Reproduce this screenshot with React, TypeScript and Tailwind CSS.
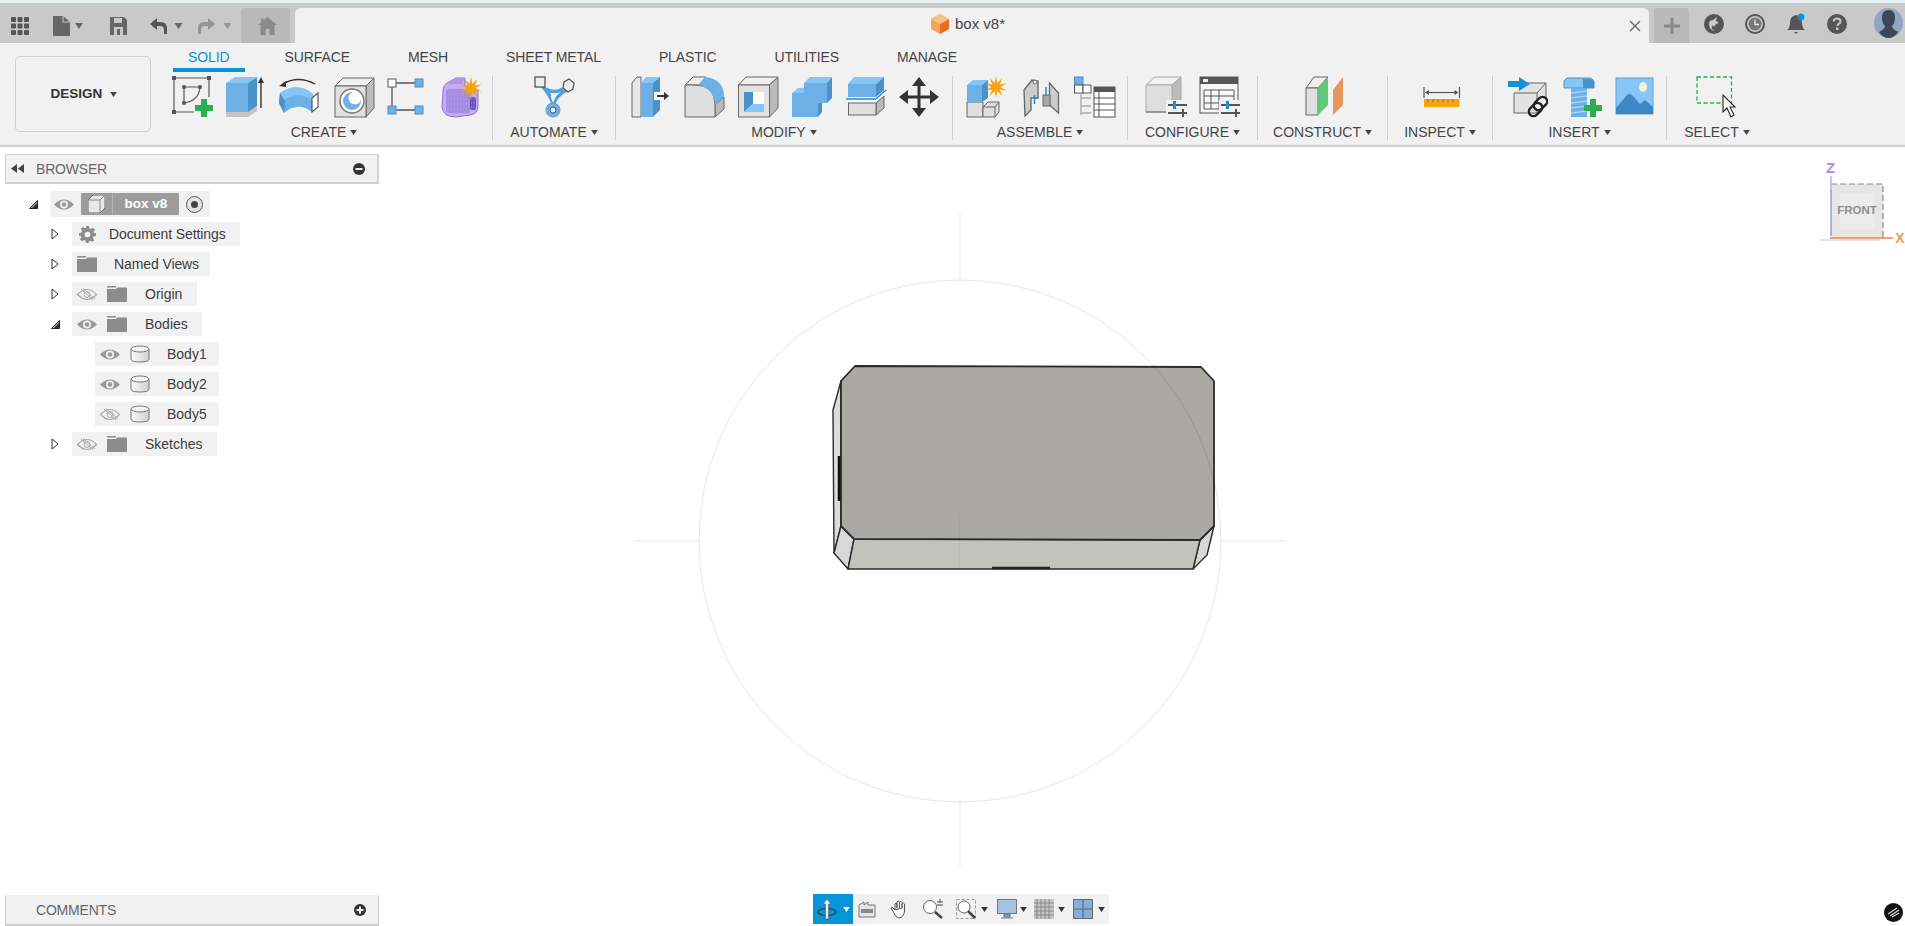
import React from 'react';

const BLUE = '#6cb0e6';
const BLUE_TOP = '#85c6f7';
const BLUE_DARK = '#4b91c9';
const EDGE = '#666';
const ORANGE = '#f5a40c';

const starPoints = (cx: number, cy: number, r1: number, r2: number, n: number) =>
  Array.from({ length: n * 2 }, (_, i) => {
    const r = i % 2 === 0 ? r1 : r2;
    const a = (Math.PI * i) / n - Math.PI / 2;
    return `${(cx + r * Math.cos(a)).toFixed(1)},${(cy + r * Math.sin(a)).toFixed(1)}`;
  }).join(' ');

const Caret = ({ color = '#444', w = 7, h = 5 }: { color?: string; w?: number; h?: number }) => (
  <svg width={w} height={h} viewBox="0 0 8 6" className="block shrink-0">
    <path d="M0 0H8L4 6Z" fill={color} />
  </svg>
);

const Ico = ({ children }: { children: React.ReactNode }) => (
  <div className="w-[54px] flex justify-center">
    <svg width="44" height="44" viewBox="0 0 44 44" className="block -mt-[2px]">
      {children}
    </svg>
  </div>
);

const Dot = ({ x, y, s = 4 }: { x: number; y: number; s?: number }) => (
  <rect x={x - s / 2} y={y - s / 2} width={s} height={s} fill="#555" />
);

const Plus = ({ cx, cy }: { cx: number; cy: number }) => (
  <path d={`M${cx - 3} ${cy - 9}h6v6h6v6h-6v6h-6v-6h-6v-6h6z`} fill="#2cae4f" />
);

const Sliders = ({ x }: { x: number }) => (
  <g>
    <rect x={x - 2} y={26} width={22} height={17} fill="#f1f1f1" />
    <path d={`M${x} 31H${x + 19}M${x} 39H${x + 19}`} stroke="#555" strokeWidth="2" />
    <rect x={x + 5} y={27} width={3} height={8} fill="#1a8fd8" />
    <rect x={x + 14} y={35} width={2} height={8} fill="#555" />
  </g>
);

const SketchIcon = () => (
  <Ico>
    <path d="M3 4H38V23M3 4V38H23" fill="none" stroke="#555" strokeWidth="1.2" />
    <Dot x={3} y={4} /><Dot x={38} y={4} /><Dot x={3} y={38} />
    <path d="M13 13H29M13 13V29M29 13Q28 27 13 29" fill="none" stroke="#555" strokeWidth="1.2" />
    <Dot x={13} y={13} s={3.5} /><Dot x={29} y={13} s={3.5} /><Dot x={13} y={29} s={3.5} />
    <Plus cx={33} cy={34} />
  </Ico>
);

const ExtrudeIcon = () => (
  <Ico>
    <g transform="translate(-2 0)">
      <path d="M3 38H25L34 32V37L25 43H3Z" fill="#c4c4c4" />
      <path d="M3 9L12 3H34L25 9Z" fill={BLUE_TOP} />
      <path d="M25 9L34 3V32L25 38Z" fill={BLUE_DARK} />
      <rect x="3" y="9" width="22" height="29" fill={BLUE} />
      <path d="M38 8V34" stroke="#333" strokeWidth="1.4" />
      <path d="M38 3L35 9H41Z" fill="#333" />
    </g>
  </Ico>
);

const SweepIcon = () => (
  <Ico>
    <g transform="translate(-2 0)">
      <path d="M3 19Q21 7 36 20L35 38Q21 27 7 39L2 29Z" fill={BLUE} />
      <path d="M3 19Q21 7 36 20L35 26Q21 15 2 29Z" fill={BLUE_TOP} />
      <path d="M3 19L2 29L7 39L8 27Z" fill={BLUE_DARK} />
      <path d="M35 24L41 19V33L35 38Z" fill="#fff" stroke="#555" strokeWidth="1.2" />
      <path d="M6 10Q21 1 38 10" fill="none" stroke="#333" strokeWidth="1.4" />
      <path d="M2 12L9 7V13Z" fill="#333" />
    </g>
  </Ico>
);

const RevolveIcon = () => (
  <Ico>
    <path d="M2 12L10 4H41L33 12Z" fill="#efefef" stroke={EDGE} />
    <path d="M33 12L41 4V34L33 43Z" fill="#bbb" stroke={EDGE} />
    <rect x="2" y="12" width="31" height="31" fill="#e0e0e0" stroke={EDGE} />
    <circle cx="19" cy="27" r="12" fill="#fff" stroke="#777" strokeWidth="1.5" />
    <circle cx="19" cy="27" r="9" fill={BLUE} />
    <circle cx="22" cy="24" r="6.5" fill="#fff" />
  </Ico>
);

const NodesIcon = () => (
  <Ico>
    <path d="M9 9H28M5 13V32M9 36H28" stroke="#555" strokeWidth="1.3" />
    <rect x="1" y="5" width="8" height="8" fill="#fff" stroke="#555" />
    <rect x="28" y="5" width="8" height="8" fill={BLUE} stroke={BLUE_DARK} />
    <rect x="1" y="32" width="8" height="8" fill={BLUE} stroke={BLUE_DARK} />
    <rect x="28" y="32" width="8" height="8" fill={BLUE} stroke={BLUE_DARK} />
  </Ico>
);

const FormIcon = () => (
  <Ico>
    <g transform="translate(-1 0)">
      <path d="M3 18Q3 10 9 8L16 4H25V12H32L38 18V32Q38 40 30 41L16 43Q3 43 2 33Z" fill="#c3adef" stroke="#8f6bd6" />
      <path d="M8 8L16 4H25L22 10H10Z" fill="#b094e8" />
      <rect x="6" y="15" width="24" height="24" rx="3" fill="#a68ce2" />
      <path d="M8 20H28M8 25H28M8 30H28M8 35H28" stroke="#c7b5f0" strokeWidth="0.8" strokeDasharray="1 2" />
      <rect x="30" y="23" width="6" height="13" rx="2" fill="#6f52bf" />
      <path d="M31 25H35M31 29H35M31 33H35" stroke="#b7a2ea" strokeWidth="0.8" strokeDasharray="1 1.500" />
      <polygon points={starPoints(31, 14, 11, 4.5, 10)} fill={ORANGE} />
    </g>
  </Ico>
);

const AutomateIcon = () => (
  <Ico>
    <path d="M10 12Q18 20 21 30M35 16Q26 20 21 30M14 15Q22 20 31 15" fill="none" stroke="#4f9fd8" strokeWidth="3.4" />
    <path d="M18.500 22L21 29L24 22Z" fill="#f1f1f1" />
    <rect x="3" y="3" width="10" height="10" fill="#eee" stroke="#555" strokeWidth="1.3" />
    <path d="M37 5L42 9L41 15L36 18L31 14L32 8Z" fill="#eee" stroke="#555" strokeWidth="1.3" />
    <circle cx="21" cy="36" r="7" fill="#6cb0e6" stroke="#4f9fd8" />
    <circle cx="21" cy="36" r="3" fill="#eee" stroke="#555" />
  </Ico>
);

const PressPullIcon = () => (
  <Ico>
    <path d="M5 9L10 3H14V43H5Z" fill="#e8e8e8" stroke={EDGE} />
    <path d="M14 9L19 3H33L26 9Z" fill={BLUE_TOP} />
    <path d="M26 9L33 3V36L26 43Z" fill={BLUE_DARK} />
    <rect x="14" y="9" width="12" height="34" fill={BLUE} />
    <rect x="27" y="18" width="8" height="8" fill="#fff" />
    <path d="M30 22H38" stroke="#333" strokeWidth="2" />
    <path d="M42 22L37 18V26Z" fill="#333" />
  </Ico>
);

const FilletIcon = () => (
  <Ico>
    <path d="M4 11L12 3H25L18 11Z" fill="#eee" stroke={EDGE} />
    <path d="M34 31L43 23V35L34 43Z" fill="#bbb" stroke={EDGE} />
    <path d="M4 11V43H34V31Q34 11 14 11Z" fill="#dedede" stroke={EDGE} />
    <path d="M18 11L24 3Q43 5 43 23L34 31Q33 15 18 11Z" fill={BLUE} />
  </Ico>
);

const ShellIcon = () => (
  <Ico>
    <path d="M3.5 11L11 3H43L34.5 11Z" fill="#efefef" stroke={EDGE} />
    <path d="M34.5 11L43 3V34L34.5 43Z" fill="#bbb" stroke={EDGE} />
    <rect x="3.5" y="11" width="31" height="32" fill="#e2e2e2" stroke={EDGE} />
    <rect x="9" y="18" width="20" height="20" fill="#fff" />
    <path d="M9 18H18V30L9 38Z" fill={BLUE_DARK} />
    <path d="M9 38L18 30H29V38Z" fill={BLUE_TOP} />
  </Ico>
);

const CombineIcon = () => (
  <Ico>
    <path d="M15 9L21 3H43L38 9Z" fill={BLUE_TOP} />
    <path d="M38 9L43 3V24L38 29Z" fill={BLUE_DARK} />
    <rect x="15" y="9" width="23" height="20" fill={BLUE} />
    <path d="M3 19L9 14H15V19Z" fill={BLUE_TOP} />
    <path d="M29 29H33V38L29 43Z" fill={BLUE_DARK} />
    <rect x="3" y="19" width="26" height="24" fill={BLUE} />
  </Ico>
);

const SplitIcon = () => (
  <Ico>
    <path d="M5 10L11 3H41L33 10Z" fill={BLUE_TOP} />
    <path d="M33 10L41 3V16L33 23Z" fill={BLUE_DARK} />
    <rect x="5" y="10" width="28" height="13" fill={BLUE} />
    <path d="M33 29L41 22V34L33 41Z" fill="#bbb" stroke={EDGE} />
    <rect x="5.5" y="29" width="27.5" height="12" fill="#dedede" stroke={EDGE} />
    <path d="M3 25H33L43 16" fill="none" stroke="#1a8fd8" strokeWidth="1.6" />
    <path d="M3 27H33L43 18" fill="none" stroke="#fff" strokeWidth="1.6" />
  </Ico>
);

const MoveIcon = () => (
  <Ico>
    <path d="M22 6V40M5 23H39" stroke="#333" strokeWidth="3" />
    <path d="M22 3L15 12H29ZM22 43L15 34H29ZM2 23L11 16V30ZM42 23L33 16V30Z" fill="#333" />
  </Ico>
);

const ComponentIcon = () => (
  <Ico>
    <path d="M3 28H19V43H3Z" fill="#dedede" stroke={EDGE} />
    <path d="M19 33L24 28H35V38L31 43H19Z" fill="#dedede" stroke={EDGE} />
    <path d="M19 33H31V43M31 33L35 28" fill="none" stroke={EDGE} />
    <path d="M3 11L9 6H24L18 11Z" fill={BLUE_TOP} />
    <path d="M18 11L24 6V24L18 28Z" fill={BLUE_DARK} />
    <rect x="3" y="11" width="15" height="17" fill={BLUE} />
    <polygon points={starPoints(32, 13, 11, 4.5, 10)} fill={ORANGE} />
  </Ico>
);

const JointIcon = () => (
  <Ico>
    <path d="M6 16L14 6L20 7V24H13V36L7 42Z" fill="#ccc" stroke={EDGE} strokeWidth="1.3" />
    <path d="M31.5 9L40.5 19V39L31.5 31Z" fill="#ccc" stroke={EDGE} strokeWidth="1.3" />
    <rect x="25" y="21" width="7" height="11" fill="#aaa" stroke={EDGE} />
    <circle cx="17" cy="8" r="2" fill="#fff" stroke={EDGE} />
    <path d="M16.5 21V30M28 13V22" stroke="#1a8fd8" strokeWidth="1.5" />
  </Ico>
);

const BomIcon = () => (
  <Ico>
    <rect x="2.5" y="3" width="8.5" height="8" fill={BLUE} stroke={BLUE_DARK} />
    <rect x="2.5" y="11" width="8.5" height="8" fill="#fff" stroke="#555" />
    <rect x="11" y="11" width="8" height="8" fill="#fff" stroke="#555" />
    <path d="M9 19V41M9 24H19M9 32H19M9 39H19" stroke="#aaa" strokeWidth="1.4" />
    <rect x="22" y="13" width="21" height="30" fill="#fff" stroke="#555" />
    <rect x="22" y="13" width="21" height="5" fill="#555" />
    <path d="M22 24H43M22 30H43M22 36H43M27 18V43" stroke="#555" />
  </Ico>
);

const ConfigCubeIcon = () => (
  <Ico>
    <path d="M2 11L11 3H37L28 11Z" fill="#f0f0f0" stroke="#aaa" />
    <path d="M28 11L37 3V29L28 38Z" fill="#bcbcbc" stroke="#aaa" />
    <path d="M2 11H28V38H2Z" fill="#dedede" stroke="#aaa" />
    <path d="M2 38H28L37 29" fill="none" stroke={EDGE} />
    <Sliders x={24} />
  </Ico>
);

const ConfigTableIcon = () => (
  <Ico>
    <rect x="2" y="3" width="38" height="36" fill="#f6f6f6" stroke="#555" />
    <rect x="2" y="3" width="38" height="7" fill="#555" />
    <rect x="5" y="5" width="5" height="3" fill="#eee" />
    <path d="M6 16H36V35H6ZM6 22H36M6 29H36M13 16V35M21 16V35" fill="none" stroke="#555" />
    <Sliders x={23} />
  </Ico>
);

const ConstructIcon = () => (
  <Ico>
    <path d="M5 14L13 3H27L17 14Z" fill="#efefef" stroke={EDGE} />
    <path d="M5 14H17V41H5Z" fill="#e0e0e0" stroke={EDGE} />
    <path d="M17 14L27 3V31L17 41Z" fill="#62c878" />
    <path d="M32 16L42 3V31L32 41Z" fill="#e3965e" />
  </Ico>
);

const InspectIcon = () => (
  <Ico>
    <path d="M6 13V24M41.5 13V24" stroke="#555" strokeWidth="1.2" />
    <path d="M9 18.5H39" stroke="#555" strokeWidth="1.2" />
    <path d="M7 18.5L11 16V21ZM40.5 18.5L36.5 16V21Z" fill="#555" />
    <rect x="6" y="25" width="35.5" height="8" fill={ORANGE} />
    <path d="M10 25v3M15 25v3M20 25v3M25 25v3M30 25v3M35 25v3" stroke="#a56f10" />
  </Ico>
);

const LinkIcon = () => (
  <Ico>
    <path d="M10 19L20 9H42L42 30L34 39H10Z" fill="#e2e2e2" />
    <path d="M10 19H33V39H10ZM33 19L42 9V32" fill="none" stroke={EDGE} />
    <path d="M20 9H42" stroke={EDGE} />
    <path d="M4 7H15V3L26 10L15 17V13H4Z" fill="#1a8fd8" />
    <rect x="32" y="22" width="9" height="15" rx="4.500" transform="rotate(45 36.500 29.500)" fill="#f1f1f1" stroke="#222" strokeWidth="2.4" />
    <rect x="27" y="28" width="9" height="15" rx="4.500" transform="rotate(45 31.500 35.500)" fill="none" stroke="#222" strokeWidth="2.4" />
  </Ico>
);

const BoltIcon = () => (
  <Ico>
    <path d="M6 7L9 4H33L36 7V14H6Z" fill={BLUE_TOP} stroke={BLUE_DARK} />
    <path d="M25 5H33L36 7V14H25Z" fill={BLUE_DARK} />
    <rect x="13" y="14" width="16" height="29" fill={BLUE} />
    <path d="M13 19L29 17M13 24L29 22M13 29L29 27M13 34L29 32M13 39L29 37" stroke="#a7d3f5" strokeWidth="1.4" />
    <Plus cx={35} cy={34} />
  </Ico>
);

const ImageIcon = () => (
  <Ico>
    <rect x="4" y="4" width="37" height="36" fill="#87c6f8" stroke="#5aa3dc" />
    <path d="M4 34L15 21Q18 18 22 23L28 30L33 26L41 33V40H4Z" fill="#3f88c8" />
    <ellipse cx="31" cy="13" rx="4" ry="5" fill="#f5f2d2" />
  </Ico>
);

const SelectIcon = () => (
  <Ico>
    <rect x="2" y="3" width="34.5" height="26" fill="none" stroke="#2cae4f" strokeWidth="1.3" strokeDasharray="4 2.5" />
    <path d="M28 21V38L32 34L36 43L39 41L35 33H40Z" fill="#fff" stroke="#222" strokeWidth="1.1" />
  </Ico>
);

const Group = ({ label, className, labelClass = '', children }: { label: string; className: string; labelClass?: string; children: React.ReactNode }) => (
  <div className={`h-[64px] flex flex-col items-center border-r border-[#cfcfcf] ${className}`}>
    <div className="h-[42px] flex">{children}</div>
    <div className={`mt-[6px] flex items-center gap-[4px] text-[14px] leading-[16px] text-[#444] ${labelClass}`}>
      {label}
      <Caret />
    </div>
  </div>
);

const tabs = ['SOLID', 'SURFACE', 'MESH', 'SHEET METAL', 'PLASTIC', 'UTILITIES', 'MANAGE'];

const Ribbon = () => (
  <div className="h-[104px] bg-[#f1f1f1] border-b-2 border-[#cfcfcf] flex">
    <div className="w-[164px] shrink-0 pl-[15px] pt-[13px]">
      <div className="w-[136px] h-[76px] pl-[2px] rounded-[5px] border border-[#cfcfcf] flex items-center justify-center gap-[8px] text-[13.5px] font-bold text-[#333]">
        DESIGN
        <Caret />
      </div>
    </div>
    <div className="flex-1">
      <div className="h-[29px] flex gap-[28px] pl-[9px] tracking-[-0.1px]">
        {tabs.map((t, i) => (
          <div
            key={t}
            className={
              i === 0
                ? 'px-[15px] -mr-[3px] h-[29px] pt-[6px] text-[14px] leading-[16px] text-[#0696d7] border-b-4 border-[#0696d7]'
                : 'px-[15px] h-[29px] pt-[6px] text-[14px] leading-[16px] text-[#444]'
            }
          >
            {t}
          </div>
        ))}
      </div>
      <div className="mt-[4px] flex">
        <Group label="CREATE" className="w-[329px]" labelClass="mr-[8px]">
          <SketchIcon /><ExtrudeIcon /><SweepIcon /><RevolveIcon /><NodesIcon /><FormIcon />
        </Group>
        <Group label="AUTOMATE" className="w-[123px]">
          <AutomateIcon />
        </Group>
        <Group label="MODIFY" className="w-[337px]">
          <PressPullIcon /><FilletIcon /><ShellIcon /><CombineIcon /><SplitIcon /><MoveIcon />
        </Group>
        <Group label="ASSEMBLE" className="w-[175px]">
          <ComponentIcon /><JointIcon /><BomIcon />
        </Group>
        <Group label="CONFIGURE" className="w-[130px]">
          <ConfigCubeIcon /><ConfigTableIcon />
        </Group>
        <Group label="CONSTRUCT" className="w-[130px]">
          <ConstructIcon />
        </Group>
        <Group label="INSPECT" className="w-[105px]">
          <InspectIcon />
        </Group>
        <Group label="INSERT" className="w-[174px]">
          <LinkIcon /><BoltIcon /><ImageIcon />
        </Group>
        <div className="w-[100px] h-[64px] flex flex-col items-center">
          <div className="h-[42px] flex"><SelectIcon /></div>
          <div className="mt-[6px] flex items-center gap-[4px] text-[14px] leading-[16px] text-[#444]">
            SELECT
            <Caret />
          </div>
        </div>
      </div>
    </div>
  </div>
);

const TabBar = () => (
  <div className="h-[40px] bg-[#c9c9c9] flex">
    <div className="flex items-center h-full w-[241px] shrink-0 pt-[6px]">
      <svg width="18" height="18" viewBox="0 0 18 18" className="ml-[11px]">
        <path d="M0 1q0-1 1-1h3q1 0 1 1v3q0 1-1 1H1q-1 0-1-1zM6.5 1q0-1 1-1h3q1 0 1 1v3q0 1-1 1h-3q-1 0-1-1zM13 1q0-1 1-1h3q1 0 1 1v3q0 1-1 1h-3q-1 0-1-1zM0 7.500q0-1 1-1h3q1 0 1 1v3q0 1-1 1H1q-1 0-1-1zM6.500 7.500q0-1 1-1h3q1 0 1 1v3q0 1-1 1h-3q-1 0-1-1zM13 7.500q0-1 1-1h3q1 0 1 1v3q0 1-1 1h-3q-1 0-1-1zM0 14q0-1 1-1h3q1 0 1 1v3q0 1-1 1H1q-1 0-1-1zM6.500 14q0-1 1-1h3q1 0 1 1v3q0 1-1 1h-3q-1 0-1-1zM13 14q0-1 1-1h3q1 0 1 1v3q0 1-1 1h-3q-1 0-1-1z" fill="#555" />
      </svg>
      <svg width="17" height="20" viewBox="0 0 17 20" className="ml-[24px]">
        <path d="M0 1Q0 0 1 0H10L17 6V19Q17 20 16 20H1Q0 20 0 19Z" fill="#666" />
        <path d="M10 0V6H17" fill="none" stroke="#c9c9c9" />
      </svg>
      <div className="ml-[5px]"><Caret color="#666" w={8} h={6} /></div>
      <svg width="17" height="18" viewBox="0 0 17 18" className="ml-[27px]">
        <path d="M0 1Q0 0 1 0H14L17 3V17Q17 18 16 18H1Q0 18 0 17Z" fill="#666" />
        <rect x="4" y="1" width="8" height="5" fill="#c9c9c9" />
        <rect x="4" y="10" width="9" height="8" fill="#c9c9c9" />
        <rect x="7" y="12" width="3" height="6" fill="#666" />
      </svg>
      <svg width="18" height="18" viewBox="0 0 18 18" className="ml-[22px]">
        <path d="M8 1L1 7L8 13V9H11Q15 9 15 13V17H18V11Q18 5 11 5H8Z" fill="#555" />
      </svg>
      <div className="ml-[7px]"><Caret color="#666" w={9} h={6} /></div>
      <svg width="18" height="18" viewBox="0 0 18 18" className="ml-[15px]">
        <path d="M10 1L17 7L10 13V9H7Q3 9 3 13V17H0V11Q0 5 7 5H10Z" fill="#959595" />
      </svg>
      <div className="ml-[7px]"><Caret color="#959595" w={9} h={6} /></div>
    </div>
    <div className="w-[49px] mt-[5px] pl-[4px] rounded-t-[4px] bg-[#b9b9b9] flex items-center justify-center shrink-0">
      <svg width="19" height="18" viewBox="0 0 19 18">
        <path d="M9.500 0L19 8H16.500V18H11.500V12H7.500V18H2.500V8H0L3 5.500V1.500H5.500V3.500Z" fill="#8a8a8a" />
      </svg>
    </div>
    <div className="flex-1 ml-[5px] mt-[5px] rounded-t-[6px] bg-[#f1f1f1] flex items-center relative">
      <div className="w-full flex items-center justify-center gap-[6px] -mt-[4px] pr-[8px]">
        <svg width="18" height="20" viewBox="0 0 18 20">
          <path d="M9 0L18 5V15L9 20L0 15V5Z" fill="#f2a45c" />
          <path d="M9 10L18 5V15L9 20Z" fill="#f26a1c" />
          <path d="M0 5L9 0L18 5L9 10Z" fill="#f7c089" />
        </svg>
        <span className="text-[15px] leading-[20px] text-[#444]">box v8*</span>
      </div>
      <svg width="12" height="12" viewBox="0 0 12 12" className="absolute right-[8px] top-[12px]">
        <path d="M1 1L11 11M11 1L1 11" stroke="#666" strokeWidth="1.3" />
      </svg>
    </div>
    <div className="w-[256px] shrink-0 flex items-center pt-[5px]">
      <div className="ml-[5px] w-[35px] h-[35px] rounded-t-[4px] bg-[#b9b9b9] flex items-center justify-center">
        <svg width="16" height="16" viewBox="0 0 16 16">
          <path d="M6.500 0h3v6.500H16v3H9.500V16h-3V9.500H0v-3h6.500z" fill="#8a8a8a" />
        </svg>
      </div>
      <svg width="20" height="20" viewBox="0 0 20 20" className="ml-[15px] -mt-[3px]">
        <circle cx="10" cy="10" r="10" fill="#555" />
        <path d="M5 10Q5 6 9 6L13 3L12 7L15 9L12 10L10 13L9 11Q7 13 8 15L11 17Q5 16 5 10Z" fill="#c9c9c9" />
      </svg>
      <svg width="20" height="20" viewBox="0 0 20 20" className="ml-[21px] -mt-[3px]">
        <circle cx="10" cy="10" r="9" fill="#c9c9c9" stroke="#555" strokeWidth="2" />
        <circle cx="10" cy="10" r="6.500" fill="#777" />
        <path d="M10 5.500V10.500H14" fill="none" stroke="#e8e8e8" strokeWidth="1.3" />
      </svg>
      <svg width="20" height="22" viewBox="0 0 20 22" className="ml-[21px] -mt-[3px]">
        <path d="M10 2Q4 3 4 10Q4 15 1 17H19Q16 15 16 10Q16 3 10 2Z" fill="#555" />
        <path d="M8 19H12L10 21Z" fill="#555" />
        <circle cx="15" cy="4" r="3.500" fill="#1a8fd8" />
      </svg>
      <svg width="20" height="20" viewBox="0 0 20 20" className="ml-[21px] -mt-[3px]">
        <circle cx="10" cy="10" r="10" fill="#555" />
        <path d="M6.500 7.500Q7 4.500 10 4.500Q13.500 4.500 13.500 7.500Q13.500 9 11.500 10Q10.500 10.700 10.500 12" fill="none" stroke="#c9c9c9" strokeWidth="2" />
        <rect x="9" y="13.500" width="2.500" height="2.500" fill="#c9c9c9" />
      </svg>
      <svg width="29" height="30" viewBox="0 0 29 30" className="ml-[27px] -mt-[5px]">
        <ellipse cx="14.500" cy="15" rx="14.500" ry="15" fill="#8ea6c2" />
        <path d="M14.500 2Q8 2 8 10Q8 15 11 18Q11 21 5 24Q9 30 14.500 30Q20 30 24 24Q18 21 18 18Q21 15 21 10Q21 2 14.500 2Z" fill="#3c4656" />
      </svg>
    </div>
  </div>
);

const Eye = ({ hidden }: { hidden?: boolean }) =>
  hidden ? (
    <svg width="20" height="13" viewBox="0 0 20 13">
      <path d="M0.500 6.500Q10 -3.500 19.500 6.500Q10 16.500 0.500 6.500Z" fill="none" stroke="#aaa" strokeWidth="1.2" />
      <circle cx="10" cy="6.500" r="3" fill="none" stroke="#aaa" />
      <path d="M4 1L16 12M6 0.500L18 11" stroke="#aaa" strokeWidth="1" />
    </svg>
  ) : (
    <svg width="20" height="13" viewBox="0 0 20 13">
      <path d="M0 6.500Q10 -3.500 20 6.500Q10 16.500 0 6.500Z" fill="#999" />
      <circle cx="10" cy="6.500" r="4" fill="#f1f1f1" />
      <circle cx="10" cy="6.500" r="2.300" fill="#999" />
    </svg>
  );

const Folder = () => (
  <svg width="20" height="16" viewBox="0 0 20 16">
    <path d="M0 0H9V1.500H0Z" fill="#8c8c8c" />
    <path d="M0 3H9L10 1.500H20V16H0Z" fill="#8c8c8c" />
  </svg>
);

const Gear = () => (
  <svg width="17" height="17" viewBox="0 0 24 24">
    <path d="M10 0h4l.6 3.300 2.300 1 2.800-1.900 2.900 2.900-1.900 2.800 1 2.300L24 10v4l-3.300.6-1 2.300 1.900 2.800-2.900 2.900-2.800-1.900-2.300 1L14 24h-4l-.6-3.300-2.300-1-2.800 1.900-2.900-2.900 1.900-2.800-1-2.300L0 14v-4l3.300-.6 1-2.300L2.400 4.300l2.900-2.900 2.800 1.900 2.300-1zM12 8a4 4 0 100 8 4 4 0 000-8z" fill="#8c8c8c" fillRule="evenodd" />
  </svg>
);

const Cylinder = () => (
  <svg width="20" height="18" viewBox="0 0 20 18">
    <defs>
      <linearGradient id="cyl" x1="0" x2="1" y1="0" y2="0">
        <stop offset="0" stopColor="#fafafa" />
        <stop offset="1" stopColor="#cfcfcf" />
      </linearGradient>
    </defs>
    <path d="M1 4V14Q1 17 10 17Q19 17 19 14V4Z" fill="url(#cyl)" stroke="#777" />
    <ellipse cx="10" cy="4" rx="9" ry="3" fill="#f4f4f4" stroke="#777" />
  </svg>
);

const Arrow = ({ open }: { open?: boolean }) =>
  open ? (
    <svg width="9" height="9" viewBox="0 0 9 9">
      <path d="M0.500 8.500L8.500 0.500V8.500Z" fill="#aaa" stroke="#222" />
      <path d="M3 8L8 3V8Z" fill="#333" />
    </svg>
  ) : (
    <svg width="8" height="12" viewBox="0 0 8 12">
      <path d="M1 1L7 6L1 11Z" fill="#fff" stroke="#333" />
    </svg>
  );

type Node = {
  label: string;
  indent: string;
  arrow?: 'open' | 'closed';
  eye?: 'on' | 'off';
  icon: 'folder' | 'gear' | 'cyl';
  labelClass: string;
};

const nodes: Node[] = [
  { label: 'Document Settings', indent: 'ml-[45px]', arrow: 'closed', icon: 'gear', labelClass: 'pl-[7px] pr-[14px] tracking-[-0.1px]' },
  { label: 'Named Views', indent: 'ml-[45px]', arrow: 'closed', icon: 'folder', labelClass: 'pl-[12px] pr-[11px] tracking-[-0.1px]' },
  { label: 'Origin', indent: 'ml-[45px]', arrow: 'closed', eye: 'off', icon: 'folder', labelClass: 'pl-[13px] pr-[15px]' },
  { label: 'Bodies', indent: 'ml-[45px]', arrow: 'open', eye: 'on', icon: 'folder', labelClass: 'pl-[13px] pr-[14px]' },
  { label: 'Body1', indent: 'ml-[68px]', eye: 'on', icon: 'cyl', labelClass: 'pl-[12px] pr-[12px]' },
  { label: 'Body2', indent: 'ml-[68px]', eye: 'on', icon: 'cyl', labelClass: 'pl-[12px] pr-[12px]' },
  { label: 'Body5', indent: 'ml-[68px]', eye: 'off', icon: 'cyl', labelClass: 'pl-[12px] pr-[12px]' },
  { label: 'Sketches', indent: 'ml-[45px]', arrow: 'closed', eye: 'off', icon: 'folder', labelClass: 'pl-[13px] pr-[14px]' },
];

const TreeRow = ({ node }: { node: Node }) => (
  <div className={`flex items-center h-[24px] ${node.indent}`}>
    <div className="w-[22px] flex justify-start pl-[1px]">
      {node.arrow === 'open' && <Arrow open />}
      {node.arrow === 'closed' && <Arrow />}
    </div>
    <div className="h-full bg-[#f1f1f1] flex items-center">
      {node.eye && (
        <div className="w-[30px] flex justify-center">
          <Eye hidden={node.eye === 'off'} />
        </div>
      )}
      <div className="w-[30px] flex justify-center">
        {node.icon === 'folder' && <Folder />}
        {node.icon === 'gear' && <Gear />}
        {node.icon === 'cyl' && <Cylinder />}
      </div>
      <div className={`text-[14px] leading-[24px] text-[#3c3c3c] ${node.labelClass}`}>{node.label}</div>
    </div>
  </div>
);

const BrowserPanel = () => (
  <div className="absolute left-[5px] top-[7px] w-[374px]">
    <div className="h-[30px] bg-[#f1f1f1] border border-[#d2d2d2] border-b-2 border-r-2 flex items-center">
      <svg width="13" height="9" viewBox="0 0 13 9" className="ml-[5px]">
        <path d="M6 0V9L0 4.500ZM13 0V9L7 4.500Z" fill="#444" />
      </svg>
      <span className="ml-[12px] pt-[1px] text-[14px] tracking-[-0.2px] text-[#666]">BROWSER</span>
      <svg width="12" height="12" viewBox="0 0 12 12" className="ml-auto mr-[12px]">
        <circle cx="6" cy="6" r="6" fill="#333" />
        <rect x="2.500" y="5" width="7" height="2" fill="#f1f1f1" />
      </svg>
    </div>
    <div className="mt-[7px] flex items-center h-[26px]">
      <div className="ml-[23px] w-[22px] pl-[1px]">
        <Arrow open />
      </div>
      <div className="h-full bg-[#f1f1f1] flex items-center">
        <div className="w-[31px] flex justify-center -ml-[1px] pr-[1px]"><Eye /></div>
        <div className="h-[22px] ml-[1px] bg-[#9c9c9c] flex items-center">
          <div className="w-[32px] h-full border-r border-[#b5b5b5] flex items-center justify-center">
            <svg width="17" height="18" viewBox="0 0 17 18">
              <path d="M0 5L5 0H17V13L12 18H0Z" fill="#e8e8e8" stroke="#666" />
              <path d="M0 5H12V18M12 5L17 0" fill="none" stroke="#888" />
            </svg>
          </div>
          <div className="w-[66px] text-center text-[13.5px] font-bold text-white leading-[22px]">box v8</div>
        </div>
        <div className="w-[31px] flex justify-center pr-[1px]">
          <svg width="17" height="17" viewBox="0 0 17 17">
            <circle cx="8.500" cy="8.500" r="8" fill="#e4e4e4" stroke="#555" />
            <circle cx="8.500" cy="8.500" r="3.500" fill="#444" />
          </svg>
        </div>
      </div>
    </div>
    <div className="mt-[5px] flex flex-col gap-[6px]">
      {nodes.map((n) => (
        <TreeRow key={n.label} node={n} />
      ))}
    </div>
  </div>
);

const CommentsPanel = () => (
  <div className="absolute left-[5px] bottom-0 w-[374px] h-[31px] bg-[#f1f1f1] border-b-2 border-x border-[#cfcfcf] flex items-center">
    <span className="ml-[30px] pt-[1px] text-[14px] tracking-[-0.2px] text-[#666]">COMMENTS</span>
    <svg width="12" height="12" viewBox="0 0 12 12" className="ml-auto mr-[12px]">
      <circle cx="6" cy="6" r="6" fill="#333" />
      <path d="M5 2.500h2V5h2.500v2H7v2.500H5V7H2.500V5H5z" fill="#f1f1f1" />
    </svg>
  </div>
);

const Model = () => (
  <svg width="680" height="680" viewBox="620 200 680 680" className="absolute left-[620px] top-[53px]">
    <g stroke="#e6e6e6" strokeWidth="1">
      <path d="M634 541H699M1221 541H1286M960 214V279M960 802V866" />
    </g>
    <g stroke="#2a2a2a" strokeWidth="1.4" strokeLinejoin="round">
      <path d="M841 381L833 410L834 553L841 526Z" fill="#dcdcdc" />
      <path d="M841 526L854 539L848 569L834 553Z" fill="#d8d8d8" />
      <path d="M1214 526L1200 540L1193 569L1207 555Z" fill="#d8d8d8" />
      <path d="M854 539L1200 540L1193 569L848 569Z" fill="#c1c4bc" />
      <path d="M855 366L1201 367L1214 381V526L1200 540L854 539L841 526V381Z" fill="#aaa9a3" strokeWidth="1.8" />
    </g>
    <path d="M839 456V501" stroke="#111" strokeWidth="2.5" />
    <path d="M992 568H1050" stroke="#222" strokeWidth="2.5" />
    <path d="M959.500 515V567" stroke="#000" strokeOpacity="0.04" />
    <circle cx="960" cy="541" r="261" fill="none" stroke="#000" strokeOpacity="0.1" />
  </svg>
);

const ViewCube = () => (
  <svg width="85" height="100" viewBox="1820 155 85 100" className="absolute left-[1820px] top-[8px]">
    <rect x="1831" y="184" width="52" height="54" fill="#e6e6e6" />
    <rect x="1840" y="193" width="34" height="36" fill="#ececec" />
    <path d="M1831 184H1883V238" fill="none" stroke="#888" strokeWidth="1.2" strokeDasharray="6 3" />
    <path d="M1820 240H1880" stroke="#e4e4e4" strokeWidth="2" />
    <path d="M1831 176V190" stroke="#b39af0" strokeWidth="1.2" />
    <path d="M1831 190V236" stroke="#3f55c8" strokeWidth="0.8" />
    <path d="M1830 238H1893" stroke="#ef8436" strokeWidth="1.6" />
    <text x="1830.500" y="173" textAnchor="middle" fontSize="15" fontWeight="bold" fill="#a78be8">Z</text>
    <text x="1900" y="243" textAnchor="middle" fontSize="14" fontWeight="bold" fill="#ef9a5c">X</text>
    <text x="1857" y="214" textAnchor="middle" fontSize="11.500" fontWeight="bold" fill="#8e8e8e">FRONT</text>
  </svg>
);

const NavBar = () => (
  <div className="absolute left-[813px] bottom-[2px] w-[296px] h-[30px] bg-[#f1f1f1] flex items-center">
    <div className="w-[40px] h-full bg-[#0696d7] flex items-center pl-[3px]">
      <svg width="22" height="22" viewBox="0 0 22 22">
        <ellipse cx="11" cy="14" rx="9" ry="3.500" fill="none" stroke="#333" strokeWidth="1.2" />
        <path d="M11 1L7 6H9.500V21H12.500V6H15Z" fill="#eee" stroke="#555" strokeWidth="0.6" />
      </svg>
      <div className="ml-[5px]"><Caret color="#fff" w={7} h={5} /></div>
    </div>
    <svg width="18" height="18" viewBox="0 0 18 18" className="ml-[5px]">
      <path d="M1 5L6 2V5L10 2V5H17V17H1Z" fill="#e4e4e4" stroke="#777" />
      <rect x="3" y="9" width="12" height="4" fill="#888" />
    </svg>
    <svg width="20" height="20" viewBox="0 0 20 20" className="ml-[14px]">
      <path d="M5 11V5Q6 3 7 5V9M7 9V3Q8 1 9.500 3V9M9.500 9V3Q11 1 12 3.500V9M12 9V5Q13.500 3 14.500 5V12Q14 18 9 19Q5 18 4 14L1 9Q2 7 5 11Z" fill="#fff" stroke="#555" strokeWidth="1" />
    </svg>
    <svg width="20" height="20" viewBox="0 0 20 20" className="ml-[13px]">
      <circle cx="7" cy="8" r="6.500" fill="#fff" stroke="#666" />
      <path d="M12 13L19 19" stroke="#444" strokeWidth="2.500" />
      <path d="M14 3H20M17 0V3M14 6H20" stroke="#444" strokeWidth="1" />
    </svg>
    <svg width="20" height="20" viewBox="0 0 20 20" className="ml-[13px]">
      <rect x="0.500" y="0.500" width="19" height="19" fill="none" stroke="#999" strokeDasharray="3 2" />
      <circle cx="8" cy="8" r="6" fill="#fff" stroke="#666" />
      <path d="M12 12L19 19" stroke="#444" strokeWidth="2.500" />
    </svg>
    <div className="ml-[5px]"><Caret color="#333" w={7} h={5} /></div>
    <svg width="20" height="20" viewBox="0 0 20 20" className="ml-[9px]">
      <rect x="0.500" y="0.500" width="19" height="14" fill="#a5c2e2" stroke="#777" />
      <path d="M7 15H13V18H7ZM4 19H16" fill="#999" stroke="#777" />
    </svg>
    <div className="ml-[3px]"><Caret color="#333" w={7} h={5} /></div>
    <svg width="20" height="20" viewBox="0 0 20 20" className="ml-[7px]">
      <rect x="0" y="0" width="20" height="20" fill="#c4c4c4" />
      <path d="M3 0V20M7 0V20M11 0V20M15 0V20M0 4H20M0 8H20M0 12H20M0 16H20" stroke="#777" strokeWidth="0.7" />
    </svg>
    <div className="ml-[4px]"><Caret color="#333" w={7} h={5} /></div>
    <svg width="20" height="20" viewBox="0 0 20 20" className="ml-[8px]">
      <rect x="0.500" y="0.500" width="19" height="19" fill="#86aedb" stroke="#666" />
      <path d="M10 0V20M0 10H20" stroke="#667" strokeWidth="1.2" />
    </svg>
    <div className="ml-[5px]"><Caret color="#333" w={7} h={5} /></div>
  </div>
);

const Badge = () => (
  <svg width="19" height="19" viewBox="0 0 19 19" className="absolute left-[1884px] top-[756px]">
    <circle cx="9.500" cy="9.500" r="9.500" fill="#111" />
    <path d="M4 11L13 5M6 13L15 7M8 14L15 10" stroke="#ddd" strokeWidth="1.1" />
  </svg>
);

export default function App() {
  return (
    <div className="h-screen overflow-hidden bg-white flex flex-col font-['Liberation_Sans',Arial,sans-serif]">
      <div className="h-[3px] bg-[#e9eef1]" />
      <TabBar />
      <Ribbon />
      <div className="flex-1 relative">
        <Model />
        <BrowserPanel />
        <CommentsPanel />
        <ViewCube />
        <NavBar />
        <Badge />
      </div>
    </div>
  );
}
